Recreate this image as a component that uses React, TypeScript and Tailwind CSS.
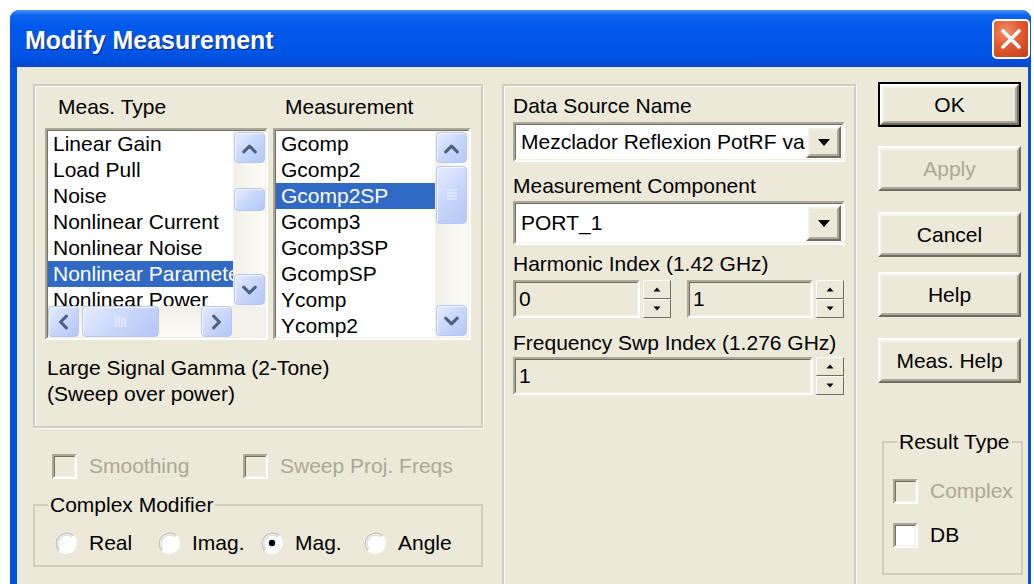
import React from "react";

const sunkenOuter =
  "border-2 border-t-[#ACA899] border-l-[#ACA899] border-b-white border-r-white";
const sunkenInner =
  "border border-t-[#716F64] border-l-[#716F64] border-b-[#F1EFE2] border-r-[#F1EFE2]";
const raisedOuter =
  "border-2 border-t-white border-l-white border-b-[#716F64] border-r-[#716F64]";
const raisedInner =
  "border-2 border-t-[#F4F2E8] border-l-[#F4F2E8] border-b-[#ACA899] border-r-[#ACA899]";

function Sunken({
  className = "",
  innerClass = "",
  children,
}: {
  className?: string;
  innerClass?: string;
  children?: React.ReactNode;
}) {
  return (
    <div className={`${sunkenOuter} ${className}`}>
      <div className={`${sunkenInner} h-full w-full ${innerClass}`}>{children}</div>
    </div>
  );
}

function Raised({
  className = "",
  innerClass = "",
  children,
}: {
  className?: string;
  innerClass?: string;
  children?: React.ReactNode;
}) {
  return (
    <div className={`${raisedOuter} bg-[#ECE9D8] ${className}`}>
      <div className={`${raisedInner} h-full w-full ${innerClass}`}>{children}</div>
    </div>
  );
}

type Dir = "up" | "down" | "left" | "right";

function Chevron({ dir }: { dir: Dir }) {
  const pts: Record<Dir, string> = {
    up: "9,19 15,13 21,19",
    down: "9,12 15,18 21,12",
    left: "18,9 12,15 18,21",
    right: "12,9 18,15 12,21",
  };
  return (
    <svg width="30" height="30" viewBox="0 0 30 30">
      <polyline
        points={pts[dir]}
        fill="none"
        stroke="#4D6185"
        strokeWidth="3.2"
        strokeLinecap="round"
        strokeLinejoin="round"
      />
    </svg>
  );
}

const xpBtn =
  "rounded-[4px] border border-[#B5C8F3] bg-[linear-gradient(135deg,#E6EDFE_0%,#CBD9FB_45%,#B3C7F6_100%)] shadow-[inset_1px_1px_0_#F4F7FF] flex items-center justify-center";

function ScrollBtn({ dir }: { dir: Dir }) {
  return (
    <div className={`w-[31px] h-[31px] shrink-0 ${xpBtn}`}>
      <Chevron dir={dir} />
    </div>
  );
}

function GripV() {
  return (
    <svg width="12" height="12" viewBox="0 0 12 12">
      {[1, 4, 7, 10].map((y) => (
        <line key={y} x1="1" y1={y} x2="11" y2={y} stroke="#EEF3FE" strokeWidth="1.2" />
      ))}
    </svg>
  );
}

function GripH() {
  return (
    <svg width="12" height="12" viewBox="0 0 12 12">
      {[1, 4, 7, 10].map((x) => (
        <line key={x} x1={x} y1="1" x2={x} y2="11" stroke="#EEF3FE" strokeWidth="1.2" />
      ))}
    </svg>
  );
}

function Checkbox({ disabled = false, label }: { disabled?: boolean; label: string }) {
  return (
    <div className="flex items-center h-[26px] whitespace-nowrap">
      <Sunken
        className="w-[25px] h-[25px] shrink-0"
        innerClass={disabled ? "bg-[#ECE9D8]" : "bg-white"}
      />
      <span className={`ml-[12px] ${disabled ? "text-[#ACA899]" : "text-black"}`}>{label}</span>
    </div>
  );
}

function Radio({ checked = false, label }: { checked?: boolean; label: string }) {
  return (
    <div className="flex items-center h-[26px] w-[103px] shrink-0">
      <svg width="24" height="24" viewBox="0 0 24 24" className="shrink-0">
        <circle cx="12" cy="12" r="11" fill="#fff" />
        <path d="M4.6 19.4 A10.5 10.5 0 0 1 19.4 4.6" fill="none" stroke="#C9C6B8" strokeWidth="1.6" />
        <path d="M5.9 18.1 A8.7 8.7 0 0 1 18.1 5.9" fill="none" stroke="#E2DFD4" strokeWidth="1.4" />
        {checked && <circle cx="12" cy="12" r="3.2" fill="#000" />}
      </svg>
      <span className="ml-[11px]">{label}</span>
    </div>
  );
}

function Tri({ up }: { up: boolean }) {
  return (
    <svg width="8" height="5" viewBox="0 0 8 5">
      <polygon points={up ? "4,0.5 7.5,4.5 0.5,4.5" : "0.5,0.5 7.5,0.5 4,4.5"} fill="#000" />
    </svg>
  );
}

function Spin() {
  return (
    <div className="flex flex-col w-[28px] h-[38px] shrink-0">
      <div className="flex-1 border border-t-white border-l-white border-b-[#716F64] border-r-[#716F64] bg-[#ECE9D8] flex items-center justify-center">
        <Tri up />
      </div>
      <div className="flex-1 border border-t-white border-l-white border-b-[#716F64] border-r-[#716F64] bg-[#ECE9D8] flex items-center justify-center">
        <Tri up={false} />
      </div>
    </div>
  );
}

function SpinEdit({ value, width }: { value: string; width: string }) {
  return (
    <div className="flex items-center">
      <Sunken className={`${width} h-[38px]`} innerClass="bg-[#ECE9D8] flex items-center pl-[3px]">
        {value}
      </Sunken>
      <div className="ml-[3px]">
        <Spin />
      </div>
    </div>
  );
}

function Combo({ text, h }: { text: string; h: string }) {
  return (
    <Sunken className={`w-[332px] ${h}`} innerClass="bg-white flex items-stretch">
      <div className="flex-1 min-w-0 overflow-hidden whitespace-nowrap flex items-center pl-[5px]">
        {text}
      </div>
      <div className="p-[1px] flex items-center">
        <Raised className="w-[35px] h-full" innerClass="flex items-center justify-center">
          <svg width="12" height="7" viewBox="0 0 12 7">
            <polygon points="0,0 12,0 6,7" fill="#000" />
          </svg>
        </Raised>
      </div>
    </Sunken>
  );
}

function Button({
  label,
  def = false,
  disabled = false,
  className = "",
}: {
  label: string;
  def?: boolean;
  disabled?: boolean;
  className?: string;
}) {
  return (
    <div className={`w-[143px] h-[45px] ${def ? "border-2 border-black" : ""} ${className}`}>
      <Raised
        className="w-full h-full"
        innerClass={`flex items-center justify-center ${disabled ? "text-[#ACA899]" : "text-black"}`}
      >
        {label}
      </Raised>
    </div>
  );
}

const measTypes = [
  "Linear Gain",
  "Load Pull",
  "Noise",
  "Nonlinear Current",
  "Nonlinear Noise",
  "Nonlinear Parameter",
  "Nonlinear Power",
];

const measurements = [
  "Gcomp",
  "Gcomp2",
  "Gcomp2SP",
  "Gcomp3",
  "Gcomp3SP",
  "GcompSP",
  "Ycomp",
  "Ycomp2",
];

const track = "bg-[linear-gradient(to_right,#F1EFE6,#FDFCF8)]";

function MeasTypeList() {
  return (
    <Sunken className="w-[223px] h-[212px]" innerClass="bg-white flex flex-col">
      <div className="flex flex-1 min-h-0">
        <div className="flex-1 min-w-0 overflow-hidden">
          {measTypes.map((t) => (
            <div
              key={t}
              className={`h-[26px] leading-[26px] pl-[5px] whitespace-nowrap ${
                t === "Nonlinear Parameter" ? "bg-[#316AC5] text-white" : ""
              }`}
            >
              {t}
            </div>
          ))}
        </div>
        <div className={`w-[32px] flex flex-col items-center pt-[1px] pb-[1px] ${track}`}>
          <ScrollBtn dir="up" />
          <div className="flex-1 w-full flex flex-col items-center pt-[25px]">
            <div className={`w-[31px] h-[23px] ${xpBtn}`} />
          </div>
          <ScrollBtn dir="down" />
        </div>
      </div>
      <div className="flex h-[31px] shrink-0">
        <div className="flex-1 flex items-center bg-[linear-gradient(to_bottom,#F1EFE6,#FDFCF8)]">
          <ScrollBtn dir="left" />
          <div className={`ml-[3px] w-[77px] h-[31px] ${xpBtn}`}>
            <GripH />
          </div>
          <div className="flex-1" />
          <ScrollBtn dir="right" />
        </div>
        <div className="w-[33px] bg-[#F3F1EA]" />
      </div>
    </Sunken>
  );
}

function MeasurementList() {
  return (
    <Sunken className="w-[198px] h-[212px]" innerClass="bg-white flex">
      <div className="flex-1 min-w-0 overflow-hidden">
        {measurements.map((t) => (
          <div
            key={t}
            className={`h-[26px] leading-[26px] pl-[5px] whitespace-nowrap ${
              t === "Gcomp2SP" ? "bg-[#316AC5] text-white" : ""
            }`}
          >
            {t}
          </div>
        ))}
      </div>
      <div className={`w-[33px] flex flex-col items-center py-[1px] ${track}`}>
        <ScrollBtn dir="up" />
        <div className="w-full flex-1 flex flex-col items-center pt-[3px]">
          <div className={`w-[31px] h-[58px] ${xpBtn}`}>
            <GripV />
          </div>
        </div>
        <ScrollBtn dir="down" />
      </div>
    </Sunken>
  );
}

const groupLine = "border-2 border-[#D0CDBE] shadow-[inset_1px_1px_0_#fff,1px_1px_0_#fff]";

export default function App() {
  return (
    <div className="w-[1034px] h-[584px] bg-white overflow-hidden pt-[10px] pl-[10px] font-['Liberation_Sans',Arial,sans-serif] text-[21px] text-black leading-[24px]">
      <div className="w-[1021px] h-[580px] flex flex-col rounded-t-[9px] overflow-hidden bg-[#0052E0]">
        {/* title bar */}
        <div className="h-[57px] shrink-0 flex items-center justify-between pl-[15px] pr-[1px] bg-[linear-gradient(to_bottom,#4A98F8_0%,#0D63EC_9%,#0059EC_30%,#0056E6_70%,#0050DE_88%,#0A47C8_100%)]">
          <span className="text-white font-bold text-[25px] pt-[3px] [text-shadow:1px_1px_0_#0A2078]">
            Modify Measurement
          </span>
          <div className="w-[38px] h-[40px] rounded-[5px] border-2 border-white bg-[radial-gradient(circle_at_35%_30%,#F0906C_0%,#E25A32_45%,#C43C18_100%)] flex items-center justify-center">
            <svg width="22" height="22" viewBox="0 0 22 22">
              <path d="M3 3 L19 19 M19 3 L3 19" stroke="#fff" strokeWidth="3.6" strokeLinecap="round" />
            </svg>
          </div>
        </div>

        {/* dialog body */}
        <div className="flex-1 ml-[7px] mr-[3px] bg-[#ECE9D8] flex items-start pl-[16px]">
          {/* left column */}
          <div className="w-[450px] pt-[17px] flex flex-col">
            <div className={`h-[344px] ${groupLine} pt-[9px] pl-[10px]`}>
              <div className="flex h-[24px]">
                <div className="w-[228px] pl-[13px]">Meas. Type</div>
                <div className="pl-[12px]">Measurement</div>
              </div>
              <div className="flex mt-[9px] gap-[5px]">
                <MeasTypeList />
                <MeasurementList />
              </div>
              <div className="mt-[15px] pl-[2px] leading-[26px]">
                <div>Large Signal Gamma (2-Tone)</div>
                <div>(Sweep over power)</div>
              </div>
            </div>

            <div className="flex mt-[25px] pl-[19px]">
              <div className="w-[191px]">
                <Checkbox disabled label="Smoothing" />
              </div>
              <Checkbox disabled label="Sweep Proj. Freqs" />
            </div>

            <fieldset className="mt-[14px] border-2 border-[#D0CDBE] pl-[19px] pt-[13px] pb-[9px]">
              <legend className="-ml-[6px] px-[2px] leading-[24px] whitespace-nowrap">Complex Modifier</legend>
              <div className="flex">
                <Radio label="Real" />
                <Radio label="Imag." />
                <Radio checked label="Mag." />
                <Radio label="Angle" />
              </div>
            </fieldset>
          </div>

          {/* data source panel */}
          <div className={`ml-[19px] mt-[17px] w-[354px] h-[510px] ${groupLine} pl-[9px] pt-[8px]`}>
            <div className="leading-[24px]">Data Source Name</div>
            <div className="mt-[4px]">
              <Combo text="Mezclador Reflexion PotRF vars" h="h-[40px]" />
            </div>
            <div className="mt-[12px] leading-[24px]">Measurement Component</div>
            <div className="mt-[3px]">
              <Combo text="PORT_1" h="h-[44px]" />
            </div>
            <div className="mt-[7px] leading-[24px]">Harmonic Index (1.42 GHz)</div>
            <div className="mt-[4px] flex">
              <SpinEdit value="0" width="w-[127px]" />
              <div className="ml-[16px]">
                <SpinEdit value="1" width="w-[126px]" />
              </div>
            </div>
            <div className="mt-[13px] leading-[24px]">Frequency Swp Index (1.276 GHz)</div>
            <div className="mt-[2px]">
              <SpinEdit value="1" width="w-[300px]" />
            </div>
          </div>

          {/* buttons */}
          <div className="ml-[22px] pt-[15px] flex flex-col">
            <Button label="OK" def />
            <Button label="Apply" disabled className="mt-[19px]" />
            <Button label="Cancel" className="mt-[21px]" />
            <Button label="Help" className="mt-[15px]" />
            <Button label="Meas. Help" className="mt-[21px]" />

            <fieldset className="mt-[47px] ml-[4px] w-[141px] border-2 border-[#D0CDBE] pl-[9px] pt-[24px] pb-[25px]">
              <legend className="ml-[4px] px-[2px] leading-[24px] whitespace-nowrap">Result Type</legend>
              <Checkbox disabled label="Complex" />
              <div className="mt-[18px]">
                <Checkbox label="DB" />
              </div>
            </fieldset>
          </div>
        </div>
      </div>
    </div>
  );
}
